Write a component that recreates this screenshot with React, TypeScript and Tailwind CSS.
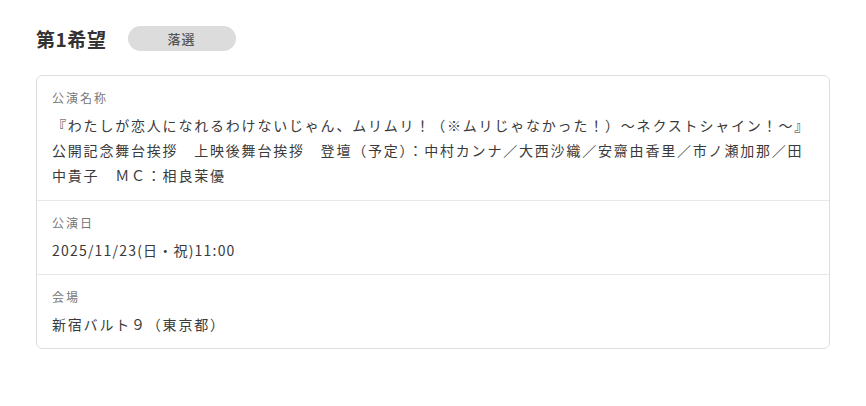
export default function App() {
  const rows = [
    {
      label: '公演名称',
      value:
        '『わたしが恋人になれるわけないじゃん、ムリムリ！（※ムリじゃなかった！）〜ネクストシャイン！〜』公開記念舞台挨拶　上映後舞台挨拶　登壇（予定）：中村カンナ／大西沙織／安齋由香里／市ノ瀬加那／田中貴子　ＭＣ：相良茉優',
      tight: false,
    },
    { label: '公演日', value: '2025/11/23(日・祝)11:00', tight: true },
    { label: '会場', value: '新宿バルト９（東京都）', tight: false },
  ];

  return (
    <div
      className="min-h-[406px] bg-white px-9 pt-[25px] text-[#333]"
      style={{ fontFamily: '"Noto Sans CJK JP", "Noto Sans", sans-serif' }}
    >
      <div className="flex items-center gap-[21px]">
        <h2 className="text-[19px] font-bold leading-[27px] tracking-[0.03em] text-[#333]">第1希望</h2>
        <span className="flex h-[25px] w-[108px] items-center justify-center rounded-full bg-[#dcdcdc] text-[13px] font-medium tracking-[0.08em] text-[#555]">
          落選
        </span>
      </div>

      <div className="mt-[23px] rounded-[6px] border border-[#dedede]">
        {rows.map((row, i) => (
          <div
            key={row.label}
            className={`px-[15px] pt-[13px] pb-[11px] ${i > 0 ? 'border-t border-[#e8e8e8]' : ''}`}
          >
            <p className="text-[12px] leading-[18px] tracking-[2px] text-[#777]">{row.label}</p>
            <p
              className={`mt-[6px] text-[14px] leading-[25.2px] text-[#3a3a3a] ${
                row.tight ? 'tracking-[1.2px]' : 'tracking-[1.8px]'
              }`}
            >
              {row.value}
            </p>
          </div>
        ))}
      </div>
    </div>
  );
}
